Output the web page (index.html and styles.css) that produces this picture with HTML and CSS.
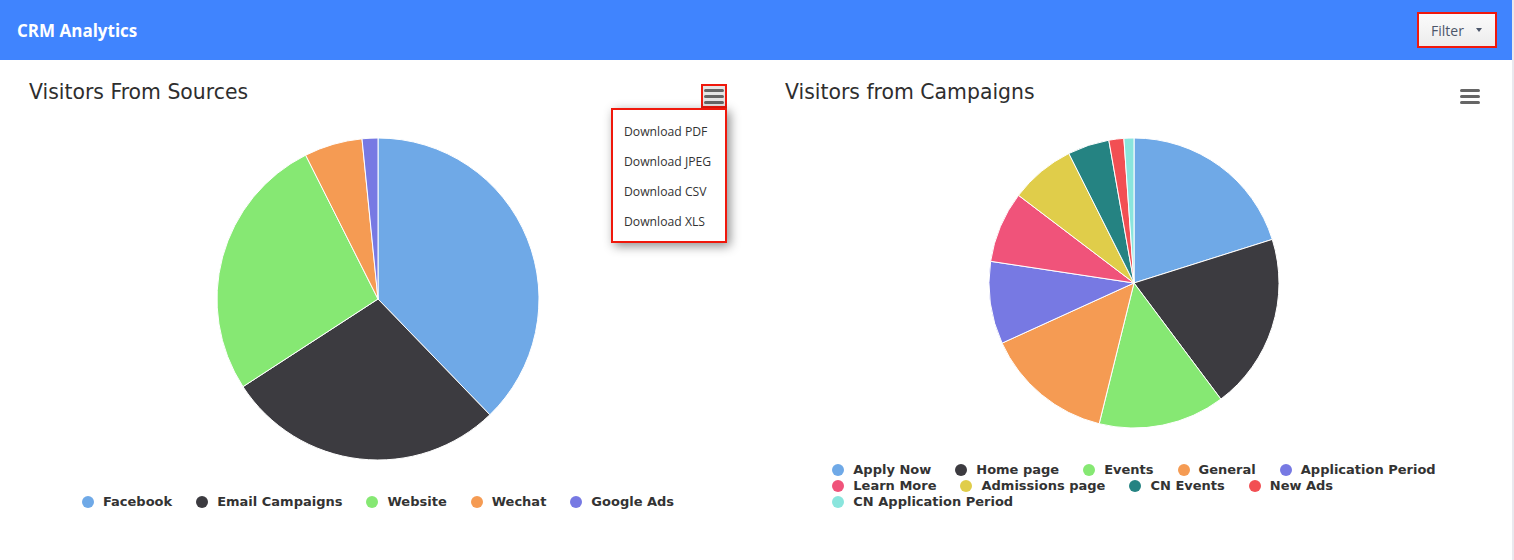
FILE: index.html
```html
<!DOCTYPE html>
<html lang="en">
<head>
    <meta charset="UTF-8">
    <meta name="viewport" content="width=device-width, initial-scale=1.0">
    <title>CRM Analytics</title>
    <link rel="stylesheet" href="styles.css">
</head>
<body>
    <div class="topbar">
        <div class="brand">CRM Analytics</div>
        <button class="btn-filter" type="button">Filter <span class="caret"></span></button>
    </div>

    <div class="charts">
        <!-- sources -->
        <div class="chart">
            <div class="chart-head">
                <h2 class="chart-title">Visitors From Sources</h2>
                <div class="menu-wrap">
                    <button class="btn-menu active" type="button"><span></span><span></span><span></span></button>
                    <ul class="menu">
                        <li>Download PDF</li>
                        <li>Download JPEG</li>
                        <li>Download CSV</li>
                        <li>Download XLS</li>
                    </ul>
                </div>
            </div>
            <svg class="pie pie-sources" width="330" height="330" viewBox="0 0 330 330">
                <path fill="#6fa9e7" d="M165,165 L165,4 A161,161 0 0,1 276.84,280.81 Z"/>
                <path fill="#3c3b40" d="M165,165 L276.84,280.81 A161,161 0 0,1 29.97,252.69 Z"/>
                <path fill="#86e873" d="M165,165 L29.97,252.69 A161,161 0 0,1 92.66,21.17 Z"/>
                <path fill="#f59b53" d="M165,165 L92.66,21.17 A161,161 0 0,1 149.01,4.80 Z"/>
                <path fill="#7779e3" d="M165,165 L149.01,4.80 A161,161 0 0,1 165,4 Z"/>
            </svg>
            <div class="legend legend-sources">
                <div class="legend-box">
                    <div class="legend-row">
                        <span class="item"><i style="background:#6fa9e7"></i>Facebook</span>
                        <span class="item"><i style="background:#3c3b40"></i>Email Campaigns</span>
                        <span class="item"><i style="background:#86e873"></i>Website</span>
                        <span class="item"><i style="background:#f59b53"></i>Wechat</span>
                        <span class="item"><i style="background:#7779e3"></i>Google Ads</span>
                    </div>
                </div>
            </div>
        </div>

        <!-- campaigns -->
        <div class="chart">
            <div class="chart-head">
                <h2 class="chart-title">Visitors from Campaigns</h2>
                <div class="menu-wrap">
                    <button class="btn-menu" type="button"><span></span><span></span><span></span></button>
                </div>
            </div>
            <svg class="pie pie-campaigns" width="300" height="300" viewBox="0 0 300 300">
                <path fill="#6fa9e7" d="M150,150 L150,5 A145,145 0 0,1 288.29,106.40 Z"/>
                <path fill="#3c3b40" d="M150,150 L288.29,106.40 A145,145 0 0,1 236.86,266.11 Z"/>
                <path fill="#86e873" d="M150,150 L236.86,266.11 A145,145 0 0,1 115.17,290.75 Z"/>
                <path fill="#f59b53" d="M150,150 L115.17,290.75 A145,145 0 0,1 18.06,210.13 Z"/>
                <path fill="#7779e3" d="M150,150 L18.06,210.13 A145,145 0 0,1 6.63,128.32 Z"/>
                <path fill="#f0537a" d="M150,150 L6.63,128.32 A145,145 0 0,1 34.50,62.33 Z"/>
                <path fill="#e0cd4a" d="M150,150 L34.50,62.33 A145,145 0 0,1 84.85,20.46 Z"/>
                <path fill="#258382" d="M150,150 L84.85,20.46 A145,145 0 0,1 124.82,7.20 Z"/>
                <path fill="#f24f53" d="M150,150 L124.82,7.20 A145,145 0 0,1 139.88,5.35 Z"/>
                <path fill="#8ae5dd" d="M150,150 L139.88,5.35 A145,145 0 0,1 150,5 Z"/>
            </svg>
            <div class="legend legend-campaigns">
                <div class="legend-box">
                    <div class="legend-row">
                        <span class="item"><i style="background:#6fa9e7"></i>Apply Now</span>
                        <span class="item"><i style="background:#3c3b40"></i>Home page</span>
                        <span class="item"><i style="background:#86e873"></i>Events</span>
                        <span class="item"><i style="background:#f59b53"></i>General</span>
                        <span class="item"><i style="background:#7779e3"></i>Application Period</span>
                    </div>
                    <div class="legend-row">
                        <span class="item"><i style="background:#f0537a"></i>Learn More</span>
                        <span class="item"><i style="background:#e0cd4a"></i>Admissions page</span>
                        <span class="item"><i style="background:#258382"></i>CN Events</span>
                        <span class="item"><i style="background:#f24f53"></i>New Ads</span>
                    </div>
                    <div class="legend-row">
                        <span class="item"><i style="background:#8ae5dd"></i>CN Application Period</span>
                    </div>
                </div>
            </div>
        </div>
    </div>
</body>
</html>
```

FILE: styles.css
```css
html {
    background-color: #e9e9ee;
}
body {
    margin: 0 2px 0 0;
    min-height: 100vh;
    background-color: #ffffff;
    font-family: "DejaVu Sans", sans-serif;
    color: #333333;
}
.topbar {
    height: 60px;
    background-color: #4084fe;
    display: flex;
    justify-content: space-between;
    align-items: center;
    padding: 0 15px 0 17px;
}
.brand {
    font-family: "Open Sans", sans-serif;
    font-weight: 700;
    font-size: 17px;
    color: #ffffff;
}
.btn-filter {
    width: 80px;
    height: 36px;
    padding: 0 0 0 12px;
    border: 2px solid #f0180c;
    background: linear-gradient(#fbfbfb, #ececec);
    color: #4c566a;
    font-family: "Open Sans", sans-serif;
    font-size: 14px;
    text-align: left;
    display: flex;
    align-items: center;
    cursor: pointer;
}
.caret {
    display: inline-block;
    margin-left: 12px;
    width: 0;
    height: 0;
    border-left: 3.5px solid transparent;
    border-right: 3.5px solid transparent;
    border-top: 4px solid #4c566a;
}
.charts {
    display: grid;
    grid-template-columns: 1fr 1fr;
}
.chart {
    display: flex;
    flex-direction: column;
    padding-top: 20px;
}
.chart-head {
    display: flex;
    justify-content: space-between;
    align-items: flex-start;
    height: 24px;
    padding: 0 29px 0 29px;
}
.chart-title {
    margin: 0;
    font-size: 20.4px;
    font-weight: normal;
    line-height: 24px;
    color: #2e2e2e;
}
.menu-wrap {
    position: relative;
    margin-top: 4px;
}
.btn-menu {
    width: 26px;
    height: 24px;
    padding: 0;
    border: 2px solid transparent;
    background: none;
    display: flex;
    flex-direction: column;
    align-items: center;
    justify-content: center;
    gap: 3px;
    cursor: pointer;
}
.btn-menu span {
    display: block;
    width: 20px;
    height: 3px;
    border-radius: 1.5px;
    background-color: #666666;
}
.btn-menu.active {
    border-color: #f0180c;
    background-color: #e6e6e6;
}
.menu {
    position: absolute;
    top: 24px;
    right: 0;
    width: 116px;
    box-sizing: border-box;
    margin: 0;
    padding: 7px 0 4px 0;
    list-style: none;
    background-color: #ffffff;
    border: 2px solid #f0180c;
    box-shadow: 3px 3px 10px rgba(0, 0, 0, 0.45);
    z-index: 10;
}
.menu li {
    height: 30px;
    line-height: 30px;
    padding-left: 11px;
    font-family: "Open Sans", sans-serif;
    font-size: 12.2px;
    color: #333333;
}
.pie {
    display: block;
    margin: 30px auto 0 auto;
}
.pie path {
    stroke: #ffffff;
    stroke-width: 1;
    stroke-linejoin: round;
}
.pie-campaigns {
    margin-top: 29px;
}
.legend {
    display: flex;
    justify-content: center;
    margin-top: 29px;
}
.legend-sources {
    margin-top: 30px;
}
.legend-box {
    display: flex;
    flex-direction: column;
}
.legend-row {
    display: flex;
    gap: 24px;
    height: 16px;
    align-items: center;
}
.item {
    display: flex;
    align-items: center;
    font-size: 13px;
    font-weight: 700;
    line-height: 16px;
    color: #333333;
    white-space: nowrap;
}
.item i {
    display: inline-block;
    width: 12px;
    height: 12px;
    border-radius: 50%;
    margin-right: 9px;
}
```
